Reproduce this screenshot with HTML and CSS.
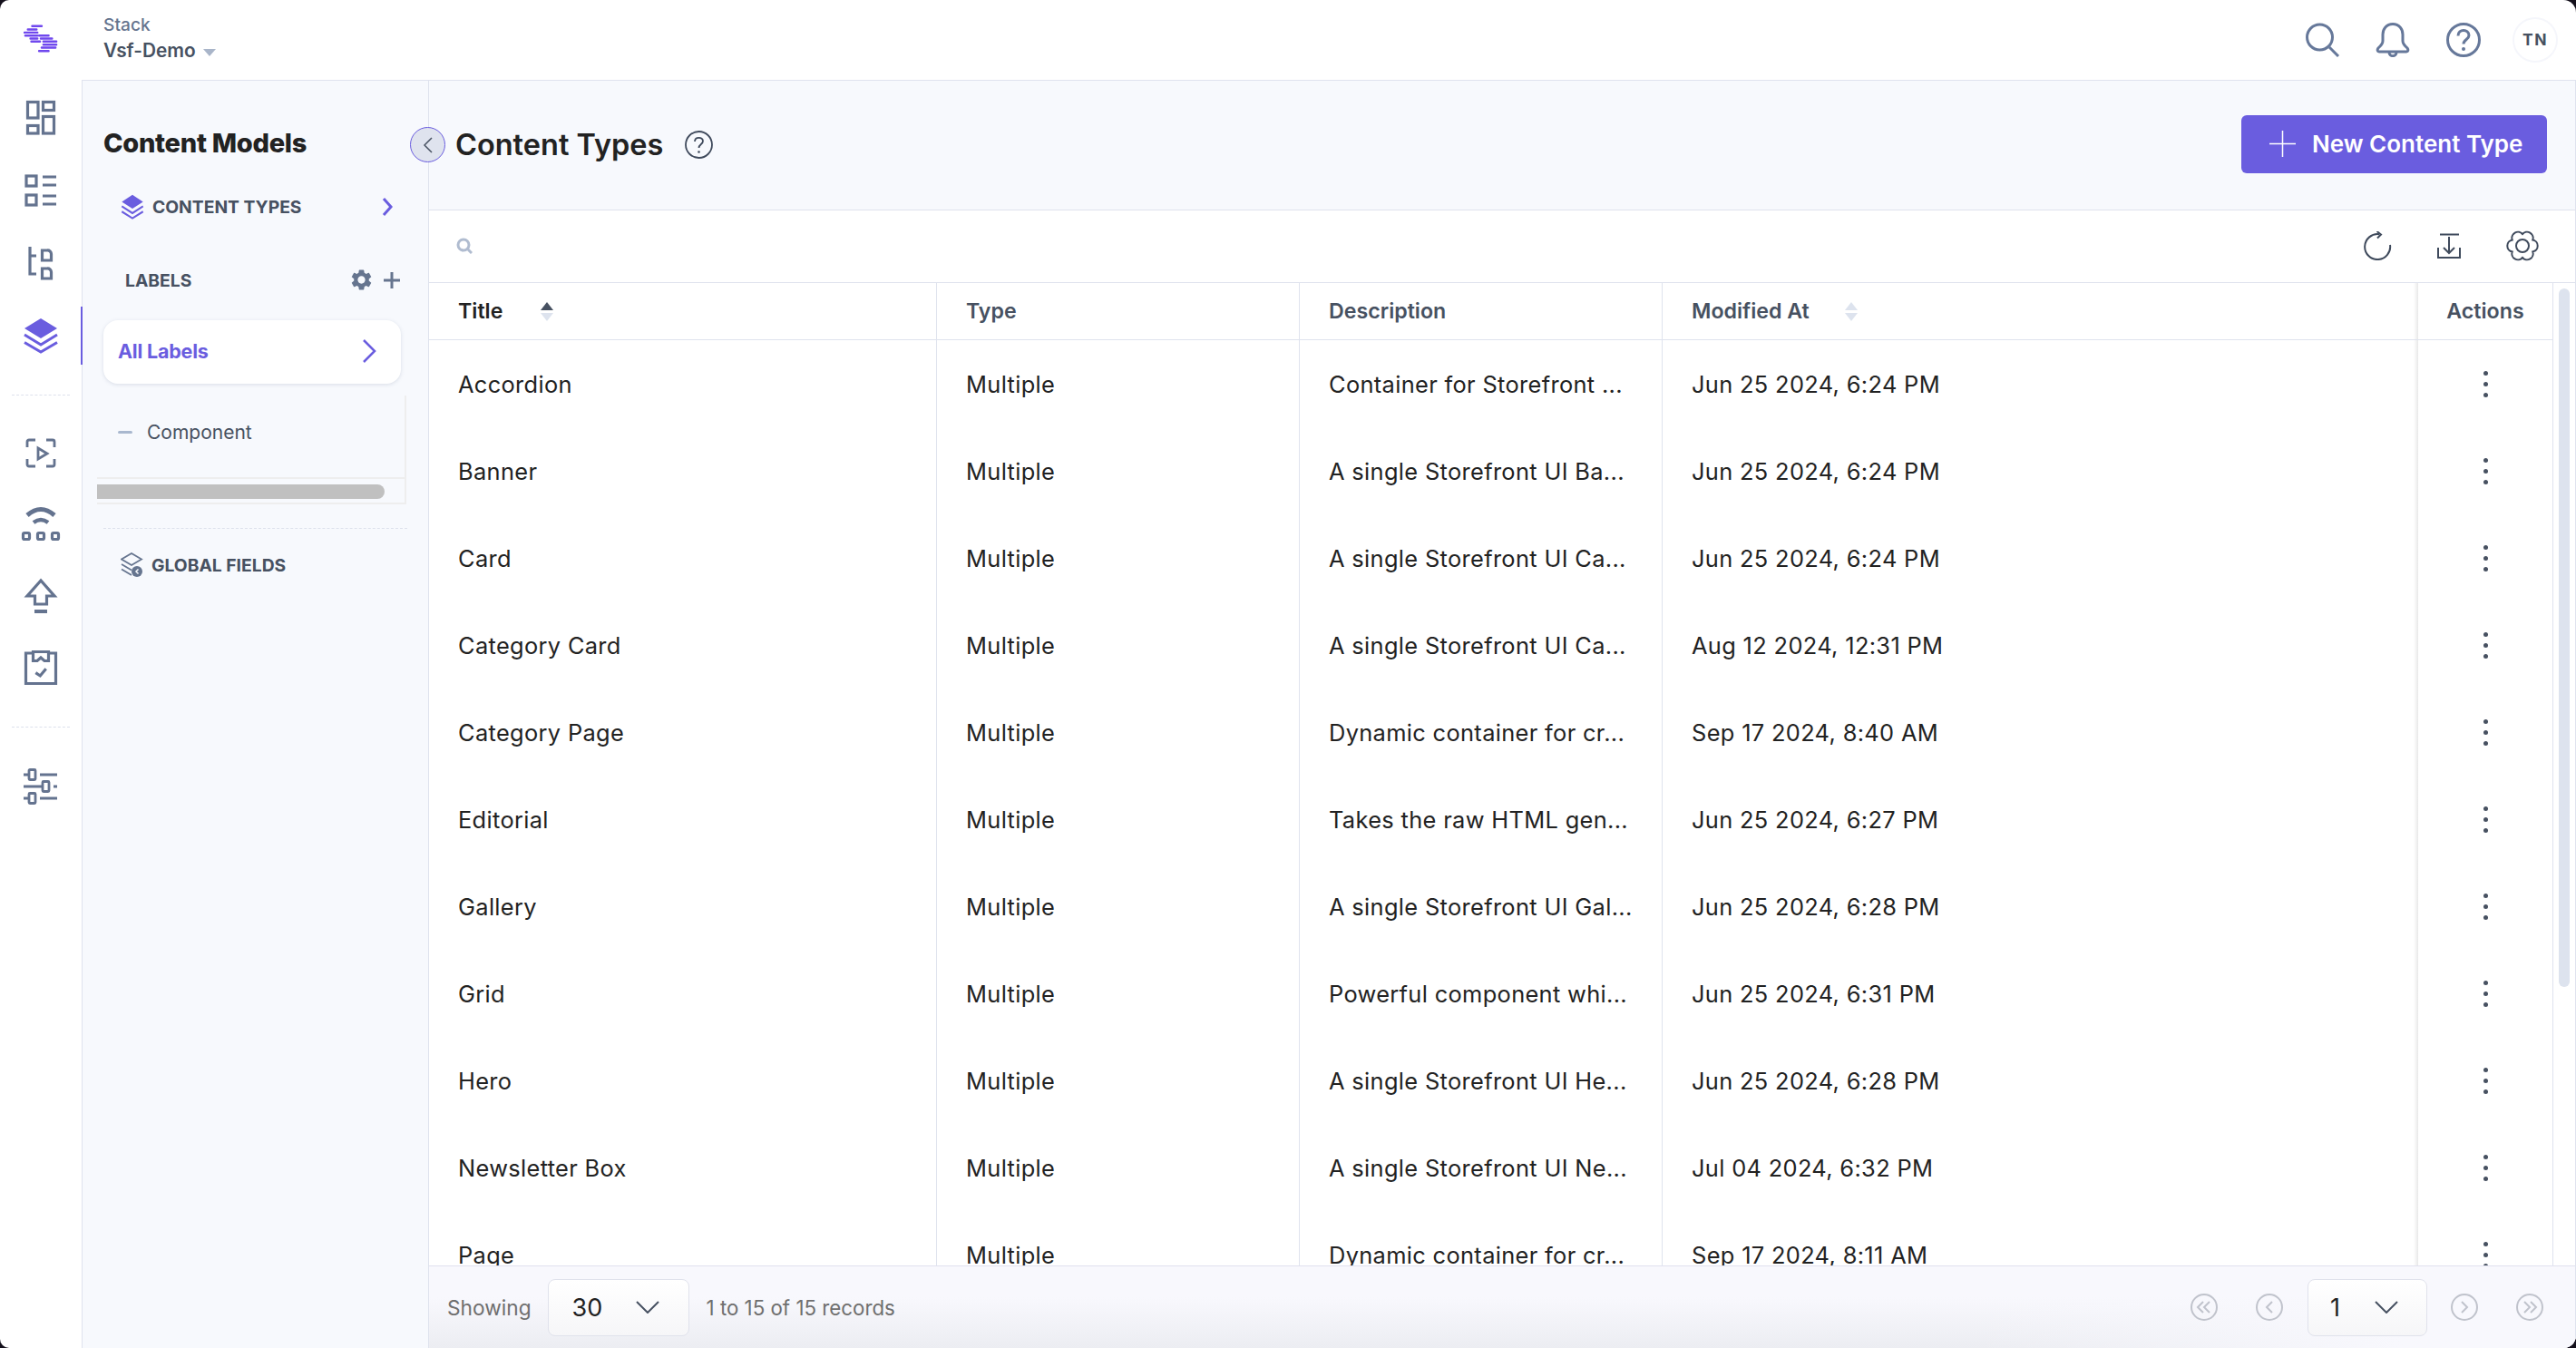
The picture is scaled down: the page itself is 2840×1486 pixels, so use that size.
FILE: index.html
```html
<!DOCTYPE html>
<html lang="en">
<head>
    <meta charset="UTF-8">
    <title>Content Types - Vsf-Demo</title>
    <link rel="stylesheet" href="styles.css">
</head>
<body>
    <svg class="defs" width="0" height="0">
        <symbol id="layers" viewBox="0 0 40 40">
            <path d="M20 1 38 12 20 23 2 12Z" fill="#6a5ddf"/>
            <path d="M2 19 20 30 38 19M2 27.5 20 38 38 27.5" fill="none" stroke="#6a5ddf" stroke-width="3"/>
        </symbol>
    </svg>
    <div class="app">
        <aside class="rail">
            <div class="rail-logo">
                <svg width="40" height="34" viewBox="0 0 40 34" fill="none" stroke="#7048ee" stroke-width="2.600" stroke-linecap="round">
                    <path d="M10 2H21M5 6H15M1 9.500H16M2 13H16M18 13H29M8 16.500H16M20 16.500H33M9 20H19M23 20H38M23 23.500H38M21 27H37M18 31H29"/>
                </svg>
            </div>
            <a class="rail-item">
                <svg class="rail-icon" viewBox="-2 -2 44 44">
                    <rect x="5.500" y="2.500" width="11.500" height="17.500"/>
                    <rect x="22.500" y="2.500" width="12" height="9"/>
                    <rect x="5.500" y="28.500" width="11.500" height="8.500"/>
                    <rect x="22.500" y="18.500" width="12" height="18.500"/>
                </svg>
            </a>
            <a class="rail-item">
                <svg class="rail-icon" viewBox="-2 -2 44 44">
                    <rect x="4" y="4" width="11" height="11"/>
                    <rect x="4" y="25" width="11" height="11"/>
                    <path d="M22 5H37M22 14H37M22 26H37M22 35H37"/>
                </svg>
            </a>
            <a class="rail-item">
                <svg class="rail-icon" viewBox="-2 -2 44 44">
                    <path d="M8 2V32H15M8 12H15"/>
                    <path d="M21.500 6H27A4 4 0 0 1 31.500 10V17H21.500ZM21.500 26H27A4 4 0 0 1 31.500 30V37H21.500Z"/>
                </svg>
            </a>
            <a class="rail-item active">
                <svg width="44" height="44" viewBox="-2 -2 44 44"><use href="#layers" width="40" height="40"/></svg>
            </a>
            <div class="rail-divider first"></div>
            <a class="rail-item short">
                <svg class="rail-icon thin" viewBox="-2 -2 44 44">
                    <path d="M14 6H7A2 2 0 0 0 5 8V14M26 6H33A2 2 0 0 1 35 8V14M14 35H7A2 2 0 0 1 5 33V27M26 35H33A2 2 0 0 0 35 33V27"/>
                    <path d="M17 15 27 21 17 27Z"/>
                </svg>
            </a>
            <a class="rail-item short">
                <svg class="rail-icon" viewBox="-2 -2 44 44">
                    <path d="M5 10Q20 -3 35 10" stroke-width="5"/>
                    <path d="M12 18Q20 12 28 18" stroke-width="4.500"/>
                    <rect x="0.500" y="29.500" width="7" height="7" rx="1.500"/>
                    <rect x="16.500" y="29.500" width="7" height="7" rx="1.500"/>
                    <rect x="32.500" y="29.500" width="7" height="7" rx="1.500"/>
                </svg>
            </a>
            <a class="rail-item short">
                <svg class="rail-icon" viewBox="-2 -2 44 44">
                    <path d="M20 3 5 20H13.500V29H26.500V20H35Z"/>
                    <path d="M13 37H27" stroke-width="4"/>
                </svg>
            </a>
            <a class="rail-item short">
                <svg class="rail-icon" viewBox="-2 -2 44 44">
                    <path d="M11 4H3.500V37.500H36.500V4H29"/>
                    <path d="M11.500 2.500H28.500V12.500L24 12.500 20 9 16 12.500H11.500Z"/>
                    <path d="M14.300 25.700 19.300 29 25.700 21.300"/>
                </svg>
            </a>
            <div class="rail-divider second"></div>
            <a class="rail-item">
                <svg class="rail-icon thin" viewBox="-2 -2 44 44">
                    <path d="M1 7H6M19 7H38M1 20H21M34 20H38M1 33H6M19 33H38"/>
                    <rect x="7" y="1.500" width="7" height="11" rx="1"/>
                    <rect x="22" y="14.500" width="7" height="11" rx="1"/>
                    <rect x="7" y="27.500" width="7" height="11" rx="1"/>
                </svg>
            </a>
        </aside>

        <div class="shell">
            <header class="topbar">
                <div class="stack">
                    <div class="stack-label">Stack</div>
                    <div class="stack-name">Vsf-Demo <span class="caret"></span></div>
                </div>
                <div class="top-actions">
                    <svg class="top-icon" width="38" height="38" viewBox="0 0 38 38">
                        <circle cx="15.500" cy="16" r="14"/>
                        <path d="M26 27 36 37"/>
                    </svg>
                    <svg class="top-icon" width="38" height="38" viewBox="0 0 38 38">
                        <path d="M19 1.500C12 1.500 8 7 8 13V20C8 24 5 26 3 28 1.500 30 2 32 4 32H34C36 32 36.500 30 35 28 33 26 30 24 30 20V13C30 7 26 1.500 19 1.500Z"/>
                        <path d="M15 32.500C15 38 23 38 23 32.500"/>
                    </svg>
                    <svg class="top-icon" width="38" height="38" viewBox="0 0 38 38">
                        <circle cx="19" cy="19" r="17.500"/>
                        <path d="M13 14.500C13 6.500 25 6.500 25 14C25 18.500 19 18.500 19 23.500"/>
                        <circle class="dot" cx="19" cy="29" r="2"/>
                    </svg>
                    <div class="avatar">TN</div>
                </div>
            </header>

            <div class="workspace">
                <aside class="panel">
                    <h2 class="panel-title">Content Models</h2>
                    <div class="panel-row">
                        <svg width="26" height="28" viewBox="0 0 40 40" preserveAspectRatio="none"><use href="#layers" width="40" height="40"/></svg>
                        <span class="panel-link">CONTENT TYPES</span>
                        <svg class="row-chevron" width="12" height="22" viewBox="0 0 12 22"><path d="M2 2 10 11 2 20"/></svg>
                    </div>
                    <div class="labels-head">
                        <span class="panel-link">LABELS</span>
                        <div class="labels-tools">
                            <svg width="23" height="23" viewBox="2.500 2 19 20"><path fill="#66758f" d="M19.140 12.940c.04-.3.06-.61.06-.94 0-.32-.02-.64-.07-.94l2.030-1.580a.49.49 0 0 0 .12-.61l-1.920-3.320a.488.488 0 0 0-.59-.22l-2.390.96c-.5-.38-1.030-.7-1.620-.94l-.36-2.540a.484.484 0 0 0-.48-.41h-3.840c-.24 0-.43.17-.47.41l-.36 2.540c-.59.24-1.130.57-1.620.94l-2.390-.96c-.22-.08-.47 0-.59.22L2.740 8.870c-.12.21-.08.47.12.61l2.030 1.580c-.05.3-.09.63-.09.94s.02.64.07.94l-2.030 1.580a.49.49 0 0 0-.12.61l1.920 3.320c.12.22.37.29.59.22l2.390-.96c.5.38 1.030.7 1.620.94l.36 2.540c.05.24.24.41.48.41h3.840c.24 0 .44-.17.47-.41l.36-2.540c.59-.24 1.130-.56 1.620-.94l2.390.96c.22.08.47 0 .59-.22l1.920-3.320c.12-.22.07-.47-.12-.61l-2.010-1.580zM12 15.600c-1.980 0-3.600-1.620-3.600-3.600s1.620-3.600 3.600-3.600 3.600 1.620 3.600 3.600-1.620 3.600-3.600 3.600z"/></svg>
                            <svg width="20" height="20" viewBox="0 0 20 20"><path d="M10 1V19M1 10H19" stroke="#66758f" stroke-width="3"/></svg>
                        </div>
                    </div>
                    <div class="label-card">
                        <span>All Labels</span>
                        <svg width="16" height="28" viewBox="0 0 16 28"><path d="M2 2 14 14 2 26" fill="none" stroke="#6a5ddf" stroke-width="2.500"/></svg>
                    </div>
                    <div class="tree">
                        <div class="tree-list">
                            <div class="tree-item"><span class="tree-dash"></span>Component</div>
                        </div>
                        <div class="tree-scroll"><div class="tree-thumb"></div></div>
                    </div>
                    <div class="panel-divider"></div>
                    <div class="panel-row">
                        <svg width="25" height="28" viewBox="0 0 25 28" fill="none" stroke="#66758f" stroke-width="1.800">
                            <path d="M12 1 23 7.500 12 14 1 7.500Z"/>
                            <path d="M1 13 12 19.500M1 18.500 12 25"/>
                            <circle cx="18" cy="21" r="6" fill="#66758f" stroke="none"/>
                            <path d="M19.500 18.500 17 21 19.500 23.500" stroke="#f7f9fd" stroke-width="1.500"/>
                        </svg>
                        <span class="panel-link">GLOBAL FIELDS</span>
                    </div>
                </aside>

                <main class="content">
                    <button class="collapse">
                        <svg width="12" height="20" viewBox="0 0 12 20"><path d="M10 2 2 10 10 18" fill="none" stroke="#475161" stroke-width="1.500"/></svg>
                    </button>
                    <div class="content-head">
                        <div class="title-wrap">
                            <h1>Content Types</h1>
                            <svg width="31" height="31" viewBox="0 0 31 31" fill="none" stroke="#3f4a5c" stroke-width="1.800">
                                <circle cx="15.500" cy="15.500" r="14.500"/>
                                <path d="M11 12C11 6.500 20 6.500 20 11.500 20 15 15.500 15 15.500 19"/>
                                <circle cx="15.500" cy="23.500" r="1.300" fill="#3f4a5c" stroke="none"/>
                            </svg>
                        </div>
                        <button class="new-btn">
                            <svg width="29" height="29" viewBox="0 0 29 29"><path d="M14.500 0V29M0 14.500H29" stroke="#fff" stroke-width="1.500"/></svg>
                            New Content Type
                        </button>
                    </div>

                    <div class="toolbar">
                        <svg width="18" height="18" viewBox="0 0 18 18" fill="none" stroke="#b0bcd0" stroke-width="3">
                            <circle cx="8" cy="8" r="6"/>
                            <path d="M12 12 17 17"/>
                        </svg>
                        <div class="tool-icons">
                            <svg class="tool-icon" width="32" height="32" viewBox="0 0 32 32">
                                <path d="M18 3.200A14 14 0 1 0 30 15"/>
                                <path d="M15.500 0 20 3.500 16 7.500"/>
                            </svg>
                            <svg class="tool-icon" width="26" height="28" viewBox="0 0 26 28">
                                <path d="M3 1.500H24M13 4V22M7 16 13 22 19 16M1 16V27H25V16"/>
                            </svg>
                            <svg class="tool-icon" width="36" height="34" viewBox="-1 -1 36 34">
                                <path d="M17 3A6.600 6.600 0 0 0 5.740 9.500 6.600 6.600 0 0 0 5.740 22.500 6.600 6.600 0 0 0 17 29 6.600 6.600 0 0 0 28.260 22.500 6.600 6.600 0 0 0 28.260 9.500 6.600 6.600 0 0 0 17 3Z"/>
                                <circle cx="17" cy="16" r="7"/>
                            </svg>
                        </div>
                    </div>

                    <div class="table-area">
                        <table class="grid">
                            <colgroup>
                                <col class="col-title"><col class="col-mid"><col class="col-mid"><col class="col-date"><col class="col-actions">
                            </colgroup>
                            <thead>
                                <tr>
                                    <th class="dark"><span class="th-inner">Title <span class="sort"><i class="up on"></i><i class="down"></i></span></span></th>
                                    <th>Type</th>
                                    <th>Description</th>
                                    <th class="date"><span class="th-inner">Modified At <span class="sort"><i class="up"></i><i class="down"></i></span></span></th>
                                    <th class="actions">Actions</th>
                                </tr>
                            </thead>
                            <tbody>
                                <tr><td>Accordion</td><td>Multiple</td><td>Container for Storefront ...</td><td class="date">Jun 25 2024, 6:24 PM</td><td class="actions"><span class="dots"></span></td></tr>
                                <tr><td>Banner</td><td>Multiple</td><td>A single Storefront UI Ba...</td><td class="date">Jun 25 2024, 6:24 PM</td><td class="actions"><span class="dots"></span></td></tr>
                                <tr><td>Card</td><td>Multiple</td><td>A single Storefront UI Ca...</td><td class="date">Jun 25 2024, 6:24 PM</td><td class="actions"><span class="dots"></span></td></tr>
                                <tr><td>Category Card</td><td>Multiple</td><td>A single Storefront UI Ca...</td><td class="date">Aug 12 2024, 12:31 PM</td><td class="actions"><span class="dots"></span></td></tr>
                                <tr><td>Category Page</td><td>Multiple</td><td>Dynamic container for cr...</td><td class="date">Sep 17 2024, 8:40 AM</td><td class="actions"><span class="dots"></span></td></tr>
                                <tr><td>Editorial</td><td>Multiple</td><td>Takes the raw HTML gen...</td><td class="date">Jun 25 2024, 6:27 PM</td><td class="actions"><span class="dots"></span></td></tr>
                                <tr><td>Gallery</td><td>Multiple</td><td>A single Storefront UI Gal...</td><td class="date">Jun 25 2024, 6:28 PM</td><td class="actions"><span class="dots"></span></td></tr>
                                <tr><td>Grid</td><td>Multiple</td><td>Powerful component whi...</td><td class="date">Jun 25 2024, 6:31 PM</td><td class="actions"><span class="dots"></span></td></tr>
                                <tr><td>Hero</td><td>Multiple</td><td>A single Storefront UI He...</td><td class="date">Jun 25 2024, 6:28 PM</td><td class="actions"><span class="dots"></span></td></tr>
                                <tr><td>Newsletter Box</td><td>Multiple</td><td>A single Storefront UI Ne...</td><td class="date">Jul 04 2024, 6:32 PM</td><td class="actions"><span class="dots"></span></td></tr>
                                <tr><td>Page</td><td>Multiple</td><td>Dynamic container for cr...</td><td class="date">Sep 17 2024, 8:11 AM</td><td class="actions"><span class="dots"></span></td></tr>
                            </tbody>
                        </table>
                        <div class="v-scroll"><div class="v-thumb"></div></div>
                    </div>

                    <footer class="pager">
                        <div class="pager-left">
                            <span class="muted">Showing</span>
                            <div class="select per-page">30
                                <svg width="26" height="14" viewBox="0 0 26 14"><path d="M1 1 13 13 25 1"/></svg>
                            </div>
                            <span class="muted records">1 to 15 of 15 records</span>
                        </div>
                        <div class="pager-right">
                            <svg class="page-btn" width="30" height="30" viewBox="0 0 30 30"><circle cx="15" cy="15" r="14"/><path d="M14 9 8 15 14 21M21 9 15 15 21 21"/></svg>
                            <svg class="page-btn" width="30" height="30" viewBox="0 0 30 30"><circle cx="15" cy="15" r="14"/><path d="M18 9 12 15 18 21"/></svg>
                            <div class="select page-no">1
                                <svg width="26" height="14" viewBox="0 0 26 14"><path d="M1 1 13 13 25 1"/></svg>
                            </div>
                            <svg class="page-btn" width="30" height="30" viewBox="0 0 30 30"><circle cx="15" cy="15" r="14"/><path d="M12 9 18 15 12 21"/></svg>
                            <svg class="page-btn" width="30" height="30" viewBox="0 0 30 30"><circle cx="15" cy="15" r="14"/><path d="M9 9 15 15 9 21M16 9 22 15 16 21"/></svg>
                        </div>
                    </footer>
                </main>
            </div>
        </div>
    </div>
</body>
</html>
```

FILE: styles.css
```css
* {
    margin: 0;
    padding: 0;
    box-sizing: border-box;
}

html, body {
    height: 100%;
    overflow: hidden;
}

body {
    background: #14101c;
    font-family: 'Inter', 'Liberation Sans', sans-serif;
    color: #222;
}

.defs {
    position: absolute;
}

.app {
    display: flex;
    height: 1486px;
    background: #fff;
    border-radius: 10px 14px 14px 10px;
    overflow: hidden;
}

/* left icon rail */
.rail {
    width: 90px;
    flex-shrink: 0;
    display: flex;
    flex-direction: column;
    align-items: stretch;
}

.rail-logo {
    height: 90px;
    display: flex;
    align-items: center;
    justify-content: center;
    padding-bottom: 5px;
}

.rail-logo svg {
    width: 38px;
}

.rail-item {
    height: 80px;
    display: flex;
    align-items: center;
    justify-content: center;
    position: relative;
}

.rail-item.short {
    height: 79px;
}

.rail-item.active::after {
    content: '';
    position: absolute;
    right: -1px;
    top: 8px;
    width: 2px;
    height: 64px;
    background: #6a5ddf;
}

.rail-icon {
    width: 44px;
    height: 44px;
    fill: none;
    stroke: #64738f;
    stroke-width: 3.200;
}

.rail-icon.thin {
    stroke-width: 2.800;
}

.rail-divider {
    margin-left: 13px;
    width: 64px;
    border-top: 1px dashed #dde1ec;
}

.rail-divider.first {
    margin-top: 25px;
    margin-bottom: 23px;
}

.rail-divider.second {
    margin-top: 26px;
    margin-bottom: 25px;
}

/* top bar */
.shell {
    flex: 1;
    display: flex;
    flex-direction: column;
    min-width: 0;
}

.topbar {
    height: 88px;
    flex-shrink: 0;
    display: flex;
    justify-content: space-between;
    align-items: center;
    padding: 0 20px 0 24px;
}

.stack-label {
    font-size: 19.200px;
    font-weight: 500;
    line-height: 23px;
    color: #66758f;
}

.stack-name {
    font-size: 20.800px;
    font-weight: 600;
    line-height: 33px;
    color: #475161;
    display: flex;
    align-items: center;
    gap: 2px;
}

.caret {
    width: 0;
    height: 0;
    margin-left: 6px;
    margin-top: 4px;
    border-left: 7px solid transparent;
    border-right: 7px solid transparent;
    border-top: 8px solid #a9b5c9;
}

.top-actions {
    display: flex;
    align-items: center;
    gap: 40px;
}

.top-icon {
    fill: none;
    stroke: #66789a;
    stroke-width: 3;
}

.top-icon:first-child {
    margin-right: 1px;
    transform: translateX(2px);
}

.top-icon .dot {
    fill: #66789a;
    stroke: none;
}

.avatar {
    width: 50px;
    height: 50px;
    margin-left: -5px;
    padding-bottom: 2px;
    border: 2px solid #f5f6fb;
    border-radius: 50%;
    display: flex;
    align-items: center;
    justify-content: center;
    font-size: 17.500px;
    font-weight: 700;
    letter-spacing: 1.500px;
    color: #475161;
}

.workspace {
    flex: 1;
    display: flex;
    min-height: 0;
    border-top: 1px solid #dfe3ee;
}

/* content models panel */
.panel {
    width: 383px;
    flex-shrink: 0;
    background: #f7f9fd;
    border-left: 1px solid #dfe3ee;
    border-right: 1px solid #dfe3ee;
    padding-top: 51px;
}

.panel-title {
    margin-left: 23px;
    font-size: 29px;
    font-weight: 800;
    letter-spacing: -0.280px;
    line-height: 36px;
    color: #222;
}

.panel-row {
    height: 40px;
    margin-top: 32px;
    padding-left: 42px;
    display: flex;
    align-items: center;
    gap: 9px;
}

.panel-link {
    font-size: 19.300px;
    font-weight: 700;
    color: #475161;
}

.row-chevron {
    margin-left: 79px;
    fill: none;
    stroke: #6a5ddf;
    stroke-width: 3;
}

.labels-head {
    height: 30px;
    margin-top: 46px;
    padding: 0 30px 0 47px;
    display: flex;
    justify-content: space-between;
    align-items: center;
}

.labels-tools {
    display: flex;
    align-items: center;
    gap: 12px;
}

.labels-tools svg:first-child {
    margin-top: -1px;
}

.label-card {
    width: 328px;
    height: 70px;
    margin: 29px 0 0 23px;
    padding: 0 27px 2px 16px;
    background: #fff;
    border-radius: 16px;
    box-shadow: 0 1px 4px rgba(102, 117, 143, 0.2);
    display: flex;
    justify-content: space-between;
    align-items: center;
    font-size: 21.500px;
    font-weight: 700;
    letter-spacing: -0.200px;
    color: #6a5ddf;
}

.tree {
    width: 341px;
    margin: 13px 0 0 16px;
    border-right: 2px solid #eee;
}

.tree-list {
    height: 89px;
    padding: 20px 0 0 23px;
}

.tree-item {
    display: flex;
    align-items: center;
    height: 40px;
    font-size: 21px;
    color: #475161;
}

.tree-dash {
    width: 16px;
    height: 3px;
    margin-right: 16px;
    background: #a9b8cf;
    border-radius: 2px;
}

.tree-scroll {
    height: 30px;
    margin-top: 1px;
    padding: 6px 0;
    border-top: 2px solid #eee;
    border-bottom: 2px solid #eee;
}

.tree-thumb {
    width: 317px;
    height: 16px;
    background: #c0c0c0;
    border-radius: 0 8px 8px 0;
}

.panel-divider {
    width: 335px;
    margin: 26px 0 0 23px;
    border-top: 1px dashed #dde1ec;
}

.panel-divider + .panel-row {
    margin-top: 20px;
}

/* main content */
.content {
    flex: 1;
    min-width: 0;
    position: relative;
    display: flex;
    flex-direction: column;
    background: #fff;
    border-right: 1px solid #dfe3ee;
}

.collapse {
    position: absolute;
    left: -21px;
    top: 51px;
    width: 39px;
    height: 39px;
    border: 1px solid #6a5ddf;
    border-radius: 50%;
    background: #dfe3ee;
    display: flex;
    align-items: center;
    justify-content: center;
    z-index: 5;
}

.content-head {
    height: 143px;
    flex-shrink: 0;
    padding: 38px 31px 0 29px;
    background: #f7f9fd;
    border-bottom: 1px solid #dfe3ee;
    display: flex;
    justify-content: space-between;
    align-items: flex-start;
}

.title-wrap {
    height: 64px;
    display: flex;
    align-items: center;
    gap: 24px;
}

.title-wrap h1 {
    font-size: 32.500px;
    font-weight: 600;
    color: #222;
}

.new-btn {
    width: 337px;
    height: 64px;
    padding: 0 0 2px 31px;
    border: none;
    border-radius: 6px;
    background: #6a5ddf;
    color: #fff;
    font-family: inherit;
    font-size: 26px;
    font-weight: 600;
    display: flex;
    align-items: center;
    gap: 18px;
}

.toolbar {
    height: 80px;
    flex-shrink: 0;
    padding: 0 40px 2px 30px;
    border-bottom: 1px solid #dfe3ee;
    display: flex;
    justify-content: space-between;
    align-items: center;
}

.tool-icons {
    display: flex;
    align-items: center;
    gap: 50px;
}

.tool-icon {
    fill: none;
    stroke: #3f4a5c;
    stroke-width: 2;
}

.table-area {
    flex: 1;
    min-height: 0;
    display: flex;
    overflow: hidden;
}

.grid {
    width: 2342px;
    flex-shrink: 0;
    height: max-content;
    table-layout: fixed;
    border-collapse: separate;
    border-spacing: 0;
}

.col-title { width: 560px; }
.col-mid { width: 400px; }
.col-date { width: 833px; }
.col-actions { width: 149px; }

th, td {
    text-align: left;
    padding-left: 32px;
    border-right: 1px solid #dfe3ee;
    white-space: nowrap;
}

th {
    height: 63px;
    border-bottom: 1px solid #dfe3ee;
    font-size: 23.200px;
    font-weight: 600;
    color: #475161;
}

th.dark {
    color: #222;
}

td {
    height: 96px;
    font-size: 25.400px;
    letter-spacing: 0.340px;
    color: #222;
}

th.date, td.date {
    border-right: none;
    background: linear-gradient(to left, rgba(0, 0, 0, 0.09), transparent 5px);
}

.th-inner {
    display: flex;
    align-items: center;
    gap: 39px;
}

th.dark .th-inner {
    gap: 42px;
}

.sort {
    display: flex;
    flex-direction: column;
    gap: 3px;
}

.sort i {
    display: block;
    width: 0;
    height: 0;
    border-left: 7px solid transparent;
    border-right: 7px solid transparent;
}

.sort .up {
    border-bottom: 9px solid #dde3ee;
}

.sort .up.on {
    border-bottom-color: #475161;
}

.sort .down {
    border-top: 9px solid #dde3ee;
}

th.actions, td.actions {
    padding: 0;
    text-align: center;
}

.dots {
    display: block;
    width: 5px;
    height: 5px;
    margin: 0 auto;
    border-radius: 50%;
    background: #475161;
    box-shadow: 0 -12px 0 #475161, 0 12px 0 #475161;
}

.v-scroll {
    flex: 1;
    padding: 6px 6px 0 6px;
}

.v-thumb {
    height: 770px;
    background: #dde3ee;
    border-radius: 6px;
}

/* pager */
.pager {
    height: 91px;
    flex-shrink: 0;
    padding: 0 35px 0 20px;
    border-top: 1px solid #e0e1ef;
    background: linear-gradient(to right, transparent 72%, #f8f8fd 92%), linear-gradient(to top, #ecedf2, #f8f8fd 62%);
    display: flex;
    justify-content: space-between;
    align-items: center;
}

.pager-left, .pager-right {
    display: flex;
    align-items: center;
}

.muted {
    font-size: 22.700px;
    color: #6f6f6f;
}

.muted.records {
    font-size: 22.300px;
    margin-left: 19px;
}

.select {
    height: 63px;
    border: 1px solid #e0e2ec;
    border-radius: 8px;
    background: linear-gradient(#fff, #f6f6f8);
    display: flex;
    align-items: center;
    justify-content: space-between;
    font-size: 27px;
    color: #222;
}

.select svg {
    fill: none;
    stroke: #475161;
    stroke-width: 2;
}

.per-page {
    width: 156px;
    margin-left: 18px;
    padding: 0 32px 0 26px;
}

.page-no {
    width: 132px;
    margin: 0 26px 0 27px;
    padding: 0 31px 0 24px;
}

.page-btn {
    fill: none;
    stroke: #c0c3cc;
    stroke-width: 2;
}

.page-btn + .page-btn {
    margin-left: 42px;
}
```
